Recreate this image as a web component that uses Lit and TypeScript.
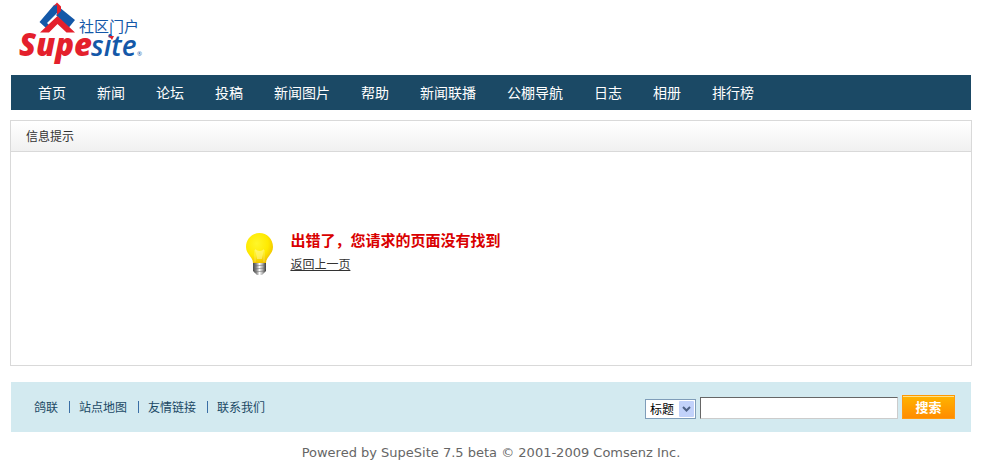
import { LitElement, html, css, svg } from "lit";
import { customElement } from "lit/decorators.js";

const NAV = ["首页", "新闻", "论坛", "投稿", "新闻图片", "帮助", "新闻联播", "公棚导航", "日志", "相册", "排行榜"];
const FOOT = ["鸽联", "站点地图", "友情链接", "联系我们"];

const logoMark = svg`
  <path d="M39.500 22 L54 5 L57 4 V13 L47 23 L49 25 L46 28 Z" fill="#1458a8"/>
  <path d="M59 7 L75 20 L68.500 28 L56 15 L60 11 Z" fill="#1458a8"/>
  <path d="M53.500 6.500 L57 2.500 L61 6.500 V11 L57 15 V5 Z" fill="#e4202c"/>
  <path d="M40 32.500 L57.500 16 L75 32.500 H66.500 L57.500 24 L49 32.500 Z" fill="#e4202c"/>
`;

@customElement("app-root")
export class AppRoot extends LitElement {
  static styles = css`
    :host {
      display: block;
      font: 12px/20px "DejaVu Sans", "Noto Sans CJK SC", sans-serif;
      color: #333;
      background: #fff;
    }
    .page { max-width: 960px; margin: 0 auto; }
    .logo { display: block; width: 160px; height: 75px; margin-left: -11px; }
    .logo text { font-family: "Open Sans", "Noto Sans", sans-serif; font-style: italic; }
    .logo .supe { font-size: 31px; font-weight: 800; fill: #e4202c; }
    .logo .site { font-size: 28px; font-weight: 600; fill: #1458a8; }
    .logo .cn { font: 400 15px "Noto Sans CJK SC", sans-serif; fill: #1458a8; }
    .logo .reg { font-size: 6px; fill: #1458a8; }
    a { color: inherit; text-decoration: none; }
    .nav { display: flex; flex-wrap: wrap; gap: 0 31px; background: #1b4965; padding: 0 27px; font: 14px/35px "Noto Sans CJK SC", sans-serif; color: #fff; }
    .panel { margin: 10px -1px 16px; border: 1px solid #d9d9d9; }
    h1 { margin: 0; padding: 0 15px; font: 12px/30px "Noto Sans CJK SC", sans-serif; border-bottom: 1px solid #d9d9d9; background: linear-gradient(#fff, #f0f0f0); }
    .msg { display: flex; gap: 17px; padding: 76px 0 89px 24%; }
    .bulb { width: 32px; height: 48px; }
    .msg p { margin: 0; font: 700 15px/24px "Noto Sans CJK SC", sans-serif; color: #d90000; }
    .back { font: 12px/24px "Noto Sans CJK SC", sans-serif; text-decoration: underline; }
    .foot { display: flex; justify-content: space-between; align-items: center; background: #d3eaf0; min-height: 50px; padding: 0 16px 0 23px; color: #1b4965; }
    .links { display: flex; gap: 11px; font: 12px/12px "Noto Sans CJK SC", sans-serif; }
    .links a + a { border-left: 1px solid #3a6ea5; padding-left: 9px; }
    form { display: flex; align-items: flex-end; gap: 4px; }
    .pick { position: relative; display: flex; }
    select { appearance: none; width: 51px; height: 20px; margin: 0; padding: 0 0 0 4px; border: 1px solid #7f9db9; border-radius: 0; background: #fff; color: #000; font: 12px/18px "Noto Sans CJK SC", sans-serif; }
    .arrow { position: absolute; right: 2px; top: 2px; width: 15px; height: 16px; pointer-events: none; }
    input { box-sizing: border-box; width: 198px; height: 22px; margin: 0; padding: 0 4px; border: 1px solid; border-color: #666 #ccc #ccc #666; background: #fff; }
    button { width: 53px; height: 24px; margin: 0; padding: 0; border: 1px solid #ff9a10; border-top-color: #f90; background: linear-gradient(#ffb400, #ff8c00); box-shadow: inset 0 1px #ffe08a; color: #fff; font: 700 13px/20px "Noto Sans CJK SC", sans-serif; }
    .copy { margin: 0; padding: 11px 0 0; font-size: 13px; line-height: 19px; text-align: center; color: #666; }
  `;

  render() {
    return html`
      <div class="page">
        <header>
          <svg class="logo" viewBox="0 0 160 75" role="img" aria-label="SupeSite 社区门户">
            ${logoMark}
            <text class="cn" x="79" y="32">社区门户</text>
            <text class="supe" x="19" y="56">Supe</text>
            <text class="site" x="91" y="56">site</text>
            <text class="reg" x="137" y="56">®</text>
            <path d="M109 36 H114 L112 40 Z" fill="#e4202c"/>
          </svg>
        </header>
        <nav class="nav">${NAV.map((t) => html`<a href="#">${t}</a>`)}</nav>
        <main class="panel">
          <h1>信息提示</h1>
          <div class="msg">
            <svg class="bulb" viewBox="-3 0 32 48" aria-hidden="true">
              <defs>
                <radialGradient id="glass" cx="0.4" cy="0.35" r="0.7">
                  <stop offset="0" stop-color="#fff62a"/>
                  <stop offset="0.6" stop-color="#ffea00"/>
                  <stop offset="1" stop-color="#eebc00"/>
                </radialGradient>
                <linearGradient id="metal">
                  <stop offset="0" stop-color="#444"/>
                  <stop offset="0.3" stop-color="#999"/>
                  <stop offset="0.5" stop-color="#fff"/>
                  <stop offset="0.75" stop-color="#aaa"/>
                  <stop offset="1" stop-color="#333"/>
                </linearGradient>
              </defs>
              <path d="M15.500 5 C8 5 2 11 2 19 C2 26 9 29 9 35 H22 C22 29 29 26 29 19 C29 11 23 5 15.500 5 Z" fill="url(#glass)"/>
              <path d="M11 21 Q16 25 20 21 L18 31 H13 Z" fill="#fff" opacity="0.35"/>
              <path d="M11 34 V22 M20 34 V22" stroke="#fff" stroke-width="1" opacity="0.3"/>
              <path d="M9 35 H22 V43 L18 47 H13 L9 43 Z" fill="url(#metal)"/>
              <path d="M9 38 L22 37 M9 41 L22 40 M10 44 L21 43" stroke="#666" stroke-width="1" opacity="0.5"/>
            </svg>
            <div>
              <p>出错了，您请求的页面没有找到</p>
              <a class="back" href="#">返回上一页</a>
            </div>
          </div>
        </main>
        <div class="foot">
          <nav class="links">${FOOT.map((t) => html`<a href="#">${t}</a>`)}</nav>
          <form>
            <span class="pick">
              <select aria-label="搜索范围"><option>标题</option></select>
              <svg class="arrow" viewBox="0 0 15 16" aria-hidden="true"><rect width="15" height="16" rx="1" fill="#c2d2fa"/><path d="M4 6 L7.500 9.500 L11 6" fill="none" stroke="#4d6185" stroke-width="2"/></svg>
            </span>
            <input type="text" aria-label="关键字" />
            <button type="button">搜索</button>
          </form>
        </div>
        <p class="copy">Powered by SupeSite 7.5 beta © 2001-2009 Comsenz Inc.</p>
      </div>
    `;
  }
}
